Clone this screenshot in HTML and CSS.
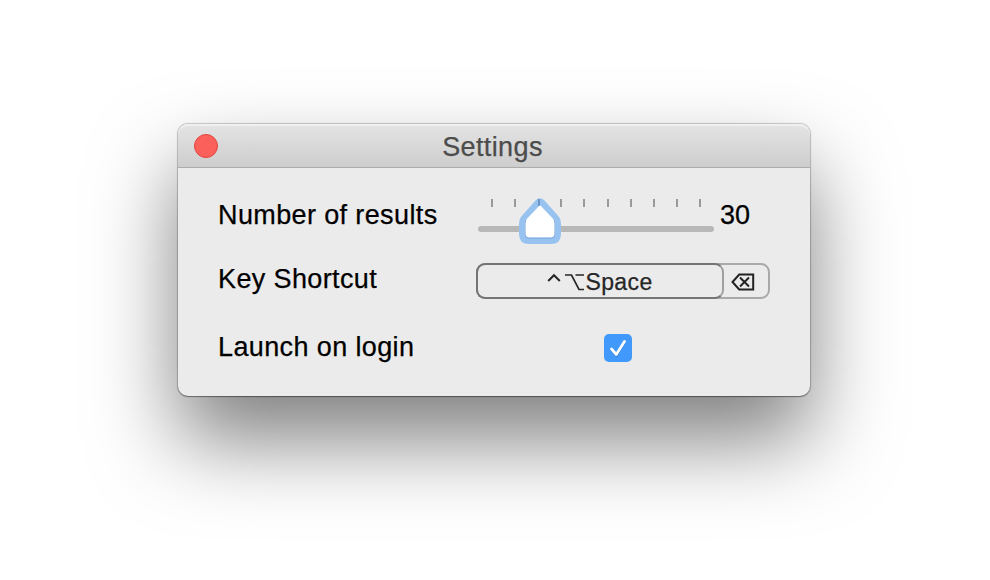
FILE: index.html
```html
<!DOCTYPE html>
<html lang="en">
<head>
<meta charset="utf-8">
<title>Settings</title>
<link rel="stylesheet" href="styles.css">
</head>
<body>
<main class="window">
  <header class="titlebar">
    <span class="close"></span>
    <h1 class="title">Settings</h1>
  </header>
  <section class="content">
    <div class="row row-results">
      <span class="label">Number of results</span>
      <div class="slider">
        <div class="ticks"><i></i><i></i><i></i><i></i><i></i><i></i><i></i><i></i><i></i><i></i></div>
        <div class="track"></div>
        <svg class="thumb" width="42" height="46" viewBox="0 0 42 46">
          <path d="M17 2Q21-1.500 25 2L38 16.500Q42 20.500 42 26V36Q42 46 32 46H10Q0 46 0 36V26Q0 20.500 4 16.500Z" fill="#98c3f1"/>
          <path d="M19 1H21V8H19Z" fill="#6e98c4"/>
          <path d="M20 8.300Q21 7.300 22 8.300L34 20.500Q36 22.500 36 25V36Q36 40.500 31.500 40.500H10.500Q6 40.500 6 36V25Q6 22.500 8 20.500Z" fill="#6fa3db"/>
          <path d="M20 8Q21 7 22 8L33.700 20.300Q35.500 22.300 35.500 25V35.500Q35.500 39.500 31.500 39.500H10.500Q6.500 39.500 6.500 35.500V25Q6.500 22.300 8.300 20.300Z" fill="#fff"/>
        </svg>
      </div>
      <span class="value">30</span>
    </div>
    <div class="row row-shortcut">
      <span class="label">Key Shortcut</span>
      <div class="shortcut">
        <div class="keys">
          <svg class="modifiers" width="38" height="20" viewBox="0 0 38 20" fill="none" stroke="#262626" stroke-width="2">
            <path d="M1.200 9L7 3.200L12.800 9"/>
            <path d="M18 3H24.500L32 17.500H37M28.500 3H37" stroke-width="1.700"/>
          </svg>
          <span>Space</span>
        </div>
        <svg class="clear" width="24" height="18" viewBox="0 0 24 18" fill="none" stroke="#222" stroke-width="2">
          <path d="M8.200 1.500H22.200V16.500H8.200L1.500 9Z"/>
          <path d="M9 4.500L18 13.500M18 4.500L9 13.500"/>
        </svg>
      </div>
    </div>
    <div class="row row-login">
      <span class="label">Launch on login</span>
      <span class="checkbox">
        <svg width="28" height="28" viewBox="0 0 28 28" fill="none" stroke-linecap="round" stroke-linejoin="round">
          <path d="M7.500 16L12.300 21.500L20.500 8.500" stroke="#2577cf" stroke-width="2.600"/>
          <path d="M7.500 15L12.300 20.500L20.500 7.500" stroke="#fff" stroke-width="2.800"/>
        </svg>
      </span>
    </div>
  </section>
</main>
</body>
</html>
```
FILE: styles.css
```css
* { box-sizing: border-box; }
body {
  margin: 0;
  height: 580px;
  padding: 124px 0 0 178px;
  overflow: hidden;
  background: #fff;
  color: #000;
  font-family: "Liberation Sans", Arial, sans-serif;
  font-size: 27px;
  letter-spacing: .38px;
  -webkit-text-stroke: .25px;
}
.window {
  width: 632px;
  height: 272px;
  border-radius: 10px;
  background: #ebebeb;
  box-shadow: 0 0 1px 1px rgba(0,0,0,.2), 0 1px 1px rgba(0,0,0,.3), 0 44px 84px rgba(0,0,0,.5);
}
.titlebar {
  display: grid;
  grid-template-columns: 56px 1fr 56px;
  align-items: center;
  height: 44px;
  border-bottom: 1px solid #acacac;
  border-radius: 10px 10px 0 0;
  background: linear-gradient(#e4e4e4, #cdcdcd);
  box-shadow: inset 0 2px 0 #f0f0f0;
}
.close {
  width: 24px;
  height: 24px;
  margin: 1px 0 0 16px;
  border: 1px solid #e2453f;
  border-radius: 50%;
  background: #fc605b;
}
.title {
  margin: 2px 3px 0 0;
  color: #4c4c4c;
  font: inherit;
  line-height: 30px;
  text-align: center;
}
.content { padding: 28px 40px 0; }
.row { display: flex; }
.row-results { height: 67px; }
.row-shortcut { height: 68px; }
.label { width: 258px; line-height: 38px; }
.row-shortcut .label, .row-login .label { line-height: 32px; }
.value { margin-left: 6px; line-height: 38px; letter-spacing: 0; }
.slider { position: relative; width: 238px; padding: 3px 0 0 2px; }
.ticks { display: flex; justify-content: space-between; width: 210px; margin-left: 13px; }
.ticks i { width: 2px; height: 8px; background: #999; }
.track { width: 236px; height: 6px; margin-top: 19px; border-radius: 3px; background: #b8b8b8; }
.thumb { position: absolute; left: 43px; top: 2px; }
.shortcut {
  display: flex;
  width: 294px;
  height: 36px;
  border: 2px solid #a9a9a9;
  border-radius: 9px;
}
.keys {
  display: flex;
  justify-content: center;
  align-items: center;
  width: 248px;
  height: 36px;
  margin: -2px 0 0 -2px;
  padding-top: 2px;
  border: 2px solid #757575;
  border-right-color: #a0a0a0;
  border-radius: 9px;
  color: #262626;
  font-size: 23px;
  line-height: 30px;
}
.clear { margin: 8px 0 0 7px; }
.checkbox {
  width: 28px;
  height: 28px;
  margin: 3px 0 0 128px;
  border-radius: 5px;
  background: #4099fb;
}
.checkbox svg { display: block; }
```
